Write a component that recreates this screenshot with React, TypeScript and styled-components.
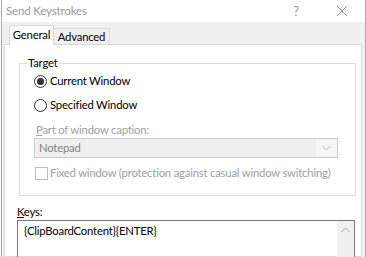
import React from "react";
import styled, { createGlobalStyle } from "styled-components";

const GlobalStyle = createGlobalStyle`
  html, body {
    margin: 0;
    padding: 0;
    background: #ffffff;
  }
  body {
    font-family: Lato, "Open Sans", "Liberation Sans", sans-serif;
    font-size: 11.3px;
    letter-spacing: -0.2px;
    color: #000000;
  }
  * {
    box-sizing: border-box;
  }
`;

const Window = styled.div`
  width: 365px;
  height: 257px;
  margin-left: 1px;
  border-left: 1px solid #a9a9a9;
  border-right: 1px solid #a9a9a9;
  background: #f0f0f0;
  display: flex;
  flex-direction: column;
  overflow: hidden;
`;

const TitleBar = styled.div`
  height: 22px;
  flex: none;
  background: #ffffff;
  display: flex;
  align-items: center;
  padding-left: 4px;
  color: #999999;
  font-size: 11.6px;
  .title {
    flex: 1;
    line-height: 14px;
  }
`;

const CaptionButton = styled.div`
  width: 46px;
  height: 22px;
  display: flex;
  align-items: center;
  justify-content: center;
  color: #9a9a9a;
  font-size: 13px;
  svg {
    width: 10px;
    height: 10px;
  }
`;

const Body = styled.div`
  flex: 1;
  display: flex;
  flex-direction: column;
  padding: 3px 3px 0 2px;
  min-height: 0;
`;

const TabRow = styled.div`
  height: 19px;
  flex: none;
  display: flex;
  align-items: flex-end;
  padding-left: 5px;
`;

const Tab = styled.div<{ $active?: boolean }>`
  position: relative;
  z-index: ${(p) => (p.$active ? 1 : 0)};
  display: flex;
  align-items: center;
  justify-content: center;
  border: 1px solid #d9d9d9;
  border-bottom: none;
  background: ${(p) => (p.$active ? "#ffffff" : "#f0f0f0")};
  height: ${(p) => (p.$active ? "20px" : "16px")};
  margin-bottom: ${(p) => (p.$active ? "-1px" : "0")};
  padding: ${(p) => (p.$active ? "0 0 1px 0" : "0")};
  width: ${(p) => (p.$active ? "45px" : "57px")};
  margin-left: ${(p) => (p.$active ? "0" : "-1px")};
  line-height: 14px;
`;

const Panel = styled.div`
  flex: 1;
  background: #ffffff;
  border: 1px solid #d9d9d9;
  padding: 11px 5px 0 12px;
  display: flex;
  flex-direction: column;
  min-height: 0;
`;

const GroupBox = styled.fieldset`
  margin: 0 0 0 2px;
  border: 1px solid #dcdcdc;
  padding: 0 7px 14px 7px;
  display: flex;
  flex-direction: column;
  min-width: 0;
  legend {
    padding: 0 1px;
    line-height: 14px;
  }
`;

const OptionRow = styled.div<{ $top: number }>`
  display: flex;
  align-items: center;
  gap: 3px;
  height: 16px;
  margin-top: ${(p) => p.$top}px;
  margin-left: 7px;
  line-height: 14px;
`;

const Radio = styled.span<{ $checked?: boolean }>`
  flex: none;
  width: 13px;
  height: 13px;
  border-radius: 50%;
  border: 1px solid #333333;
  background: #ffffff;
  display: flex;
  align-items: center;
  justify-content: center;
  &::after {
    content: "";
    width: 7px;
    height: 7px;
    border-radius: 50%;
    background: #333333;
    display: ${(p) => (p.$checked ? "block" : "none")};
  }
`;

const DisabledLabel = styled.div`
  color: #a0a0a0;
  line-height: 14px;
  margin: 10px 0 0 9px;
  u {
    text-decoration: underline;
  }
`;

const Combo = styled.div`
  margin: 1px 0 0 7px;
  width: 304px;
  height: 20px;
  border: 1px solid #cccccc;
  background: #f0f0f0;
  display: flex;
  align-items: center;
  color: #838383;
  .value {
    flex: 1;
    padding-left: 4px;
    line-height: 14px;
  }
  .button {
    width: 21px;
    height: 100%;
    background: #f6f6f6;
    display: flex;
    align-items: center;
    justify-content: center;
  }
`;

const CheckRow = styled.div`
  display: flex;
  align-items: center;
  gap: 2px;
  height: 16px;
  margin: 7px 0 0 8px;
  color: #a0a0a0;
  line-height: 14px;
  white-space: nowrap;
`;

const CheckBox = styled.span`
  flex: none;
  width: 13px;
  height: 13px;
  border: 1px solid #bcbcbc;
  background: #ffffff;
`;

const KeysLabel = styled.div`
  line-height: 14px;
  margin-top: 9px;
`;

const TextBox = styled.div`
  margin: 1px 1px 0 0;
  height: 60px;
  flex: none;
  border: 1px solid #7a7a7a;
  display: flex;
  .text {
    flex: 1;
    padding: 3px 0 0 6px;
    line-height: 14px;
  }
`;

const ScrollBar = styled.div`
  width: 17px;
  background: #f0f0f0;
  display: flex;
  flex-direction: column;
  align-items: center;
  padding-top: 6px;
`;

const Chevron = ({ up, color }: { up?: boolean; color: string }) => (
  <svg width="9" height="6" viewBox="0 0 9 6">
    <path d={up ? "M0.5 5 L4.5 1 L8.5 5" : "M0.5 1 L4.5 5 L8.5 1"} fill="none" stroke={color} strokeWidth="1" />
  </svg>
);

export default function App() {
  return (
    <>
      <GlobalStyle />
      <Window>
        <TitleBar>
          <span className="title">Send Keystrokes</span>
          <CaptionButton>?</CaptionButton>
          <CaptionButton>
            <svg viewBox="0 0 10 10">
              <path d="M0 0 L10 10 M10 0 L0 10" stroke="#8a8a8a" strokeWidth="1" />
            </svg>
          </CaptionButton>
        </TitleBar>
        <Body>
          <TabRow>
            <Tab $active>General</Tab>
            <Tab>Advanced</Tab>
          </TabRow>
          <Panel>
            <GroupBox>
              <legend>Target</legend>
              <OptionRow $top={3}>
                <Radio $checked />
                <span>Current Window</span>
              </OptionRow>
              <OptionRow $top={8}>
                <Radio />
                <span>Specified Window</span>
              </OptionRow>
              <DisabledLabel>
                <u>P</u>art of window caption:
              </DisabledLabel>
              <Combo>
                <span className="value">Notepad</span>
                <span className="button">
                  <Chevron color="#bdbdbd" />
                </span>
              </Combo>
              <CheckRow>
                <CheckBox />
                <span>Fixed window (protection against casual window switching)</span>
              </CheckRow>
            </GroupBox>
            <KeysLabel>
              <u>K</u>eys:
            </KeysLabel>
            <TextBox>
              <span className="text">{"{ClipBoardContent}{ENTER}"}</span>
              <ScrollBar>
                <Chevron up color="#a6a6a6" />
              </ScrollBar>
            </TextBox>
          </Panel>
        </Body>
      </Window>
    </>
  );
}
